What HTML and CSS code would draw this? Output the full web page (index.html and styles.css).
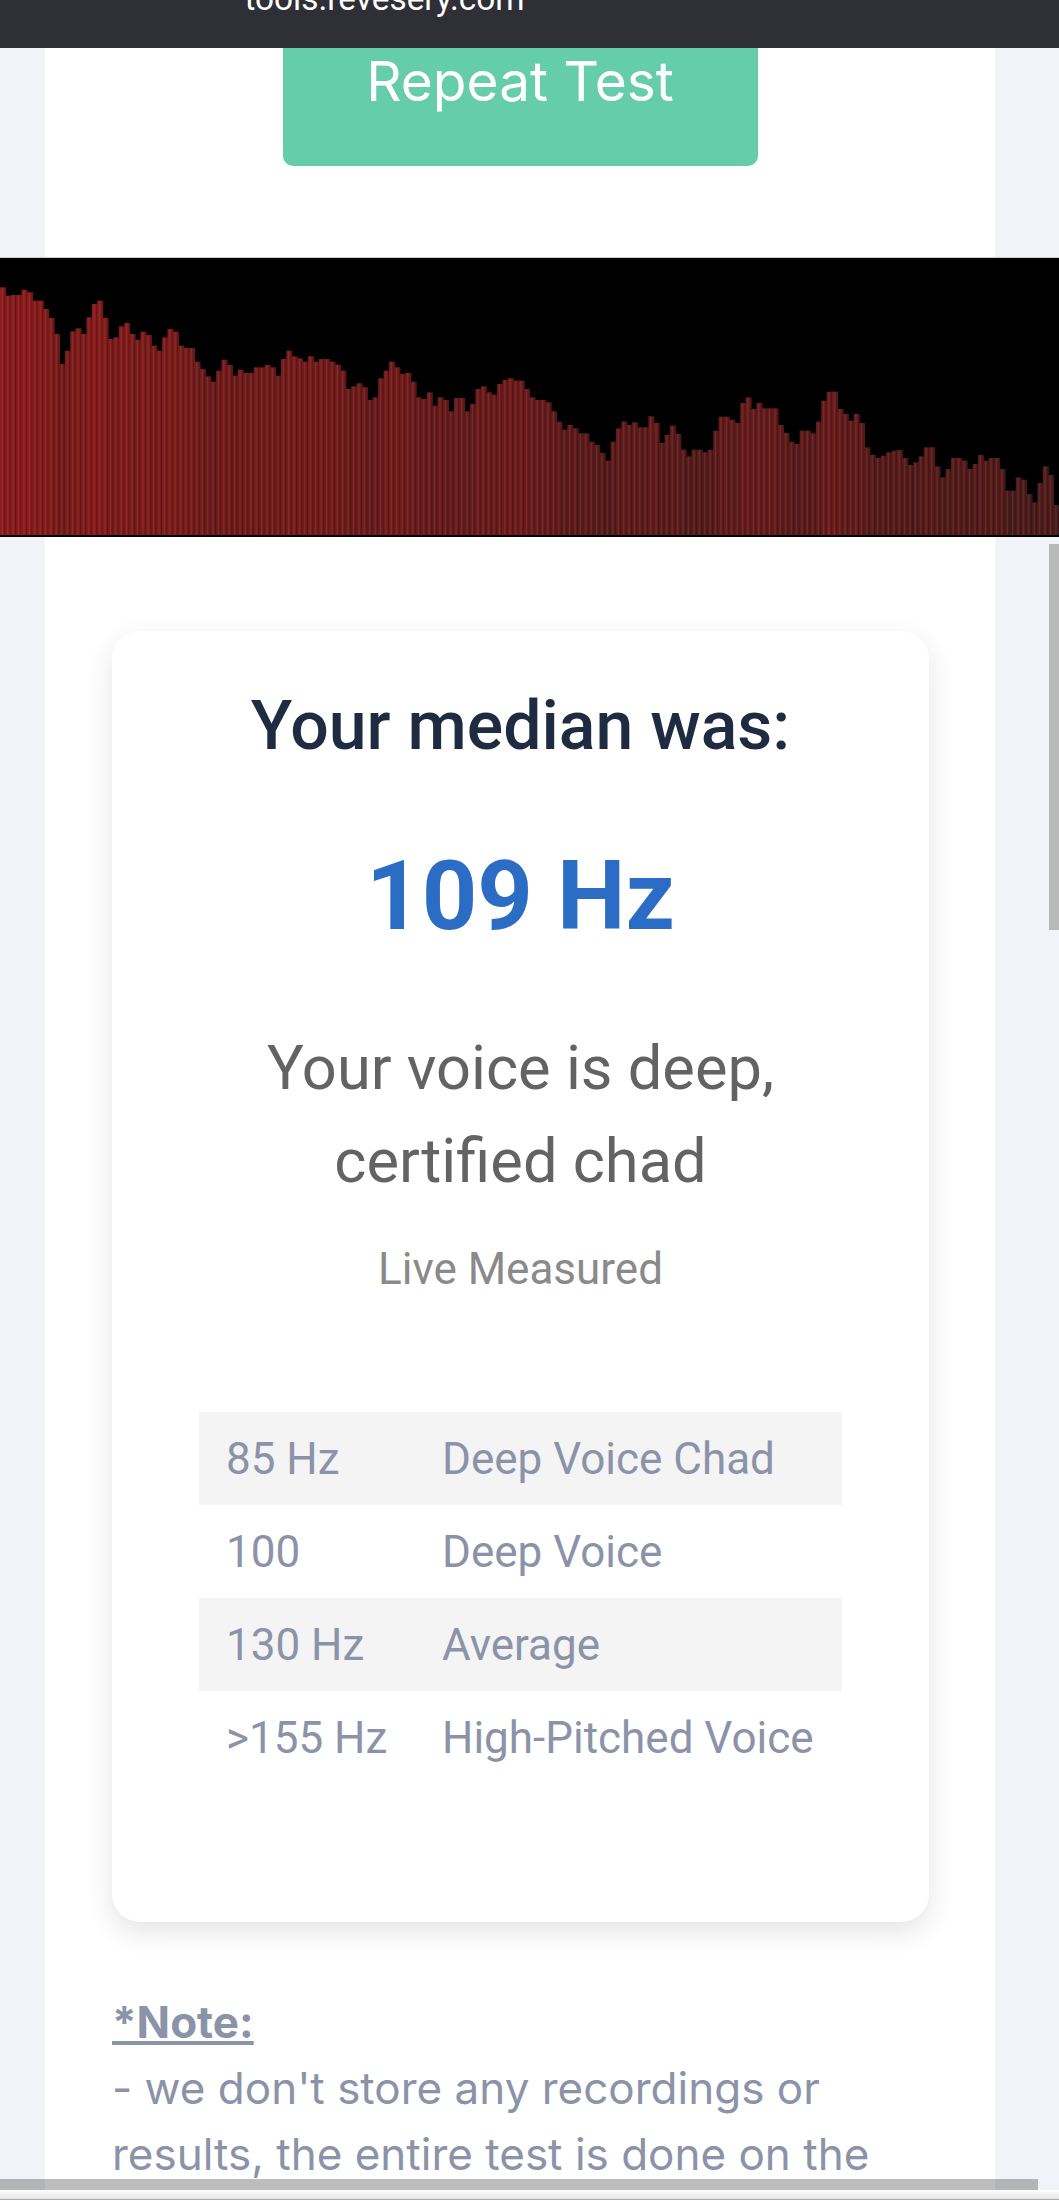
FILE: index.html
```html
<!DOCTYPE html>
<html lang="en">
<head>
<meta charset="utf-8">
<title>Voice Pitch Test</title>
<link rel="stylesheet" href="styles.css">
</head>
<body>
<div class="page">
  <header class="topbar"><span class="domain">tools.revesery.com</span></header>
  <section class="panel panel-top">
    <button class="repeat" type="button">Repeat Test</button>
  </section>
  <div class="visual"><canvas id="spectrum" width="1059" height="278"></canvas></div>
  <section class="panel panel-main">
    <div class="card">
      <h2 class="title">Your median was:</h2>
      <p class="hz">109 Hz</p>
      <p class="verdict">Your voice is deep,<br>certified chad</p>
      <p class="live">Live Measured</p>
      <table class="scale">
        <tr><td>85 Hz</td><td>Deep Voice Chad</td></tr>
        <tr><td>100</td><td>Deep Voice</td></tr>
        <tr><td>130 Hz</td><td>Average</td></tr>
        <tr><td>&gt;155 Hz</td><td>High-Pitched Voice</td></tr>
      </table>
    </div>
    <div class="note">
      <a class="note-head">*Note:</a>
      <p>- we don't store any recordings or results, the entire test is done on the</p>
    </div>
  </section>
  <div class="vscroll"></div>
  <div class="hscroll"></div>
  <div class="bottom-edge"></div>
</div>
<script src="bars.js"></script>
</body>
</html>
```
FILE: styles.css
```css
* { box-sizing: border-box; }
html, body { margin: 0; padding: 0; }
body { background: #f2f3f9; font-family: Inter, "Liberation Sans", sans-serif; }
.page { position: relative; height: 2200px; overflow: hidden; display: flex; flex-direction: column; background: #f2f3f9; }
.topbar { flex: none; height: 48px; background: #2f3035; display: flex; justify-content: center; overflow: hidden; }
.domain { color: #fff; font: 400 33.4px/30px Roboto, sans-serif; margin-top: -16px; margin-right: 290px; }
.panel { flex: none; margin: 0 65px 0 45px; width: 950px; background: #fff; }
.panel-top { height: 209px; display: flex; justify-content: center; align-items: flex-start; }
.repeat { width: 475px; height: 118px; border: 0; border-radius: 0 0 10px 10px; background: #66cdaa; color: #fff; font: 400 55px/66px Inter, sans-serif; padding: 0 0 52px; }
.visual { flex: none; height: 280px; border-top: 1px solid #c9c9ce; background: #000; overflow: hidden; }
canvas { display: block; width: 1059px; height: 278px; filter: blur(.6px); }
.panel-main { flex: 1; padding: 94px 66px 0 67px; }
.card { height: 1291px; border-radius: 28px; box-shadow: 0 10px 28px rgba(0,0,0,.11); background: #fff; text-align: center; padding-top: 55px; }
.title { margin: 0; font: 500 68px/80px Roboto, sans-serif; color: #1f2b40; }
.hz { margin: 75px 0 0; font: 700 97px/110px Roboto, sans-serif; color: #2b6dc5; }
.verdict { margin: 71px 0 0; font: 400 61.4px/93px Roboto, sans-serif; color: #636363; }
.live { margin: 31px 0 0; font: 400 44px/60px Roboto, sans-serif; color: #8a8a8a; }
.scale { margin: 113px auto 0; width: 643px; border-collapse: collapse; text-align: left; font: 400 44px/60px Roboto, sans-serif; color: #8b93a8; }
.scale td { height: 93px; padding: 1px 0 0 27px; }
.scale td:first-child { width: 216px; }
.scale tr:nth-child(odd) { background: #f4f4f4; }
.note { margin-top: 67px; font-size: 44px; line-height: 66px; color: #8b93a8; }
.note-head { font-weight: 700; text-decoration: underline; }
.note p { margin: 0; }
.vscroll { position: absolute; top: 544px; right: 0; width: 10px; height: 386px; background: #b9b9b9; }
.hscroll { position: absolute; left: 0; top: 2179px; width: 1038px; height: 11px; background: rgba(0,0,0,.26); }
.bottom-edge { position: absolute; left: 0; right: 0; top: 2190px; height: 10px; background: linear-gradient(#fff, #e6e6e6 85%, #8d8d8d); }
```
FILE: bars.js
```js
var tops = [
115,140,138,138,122,130,155,155,180,207,255,345,305,247,238,255,205,165,155,207,270,265,232,222,255,272,248,258,290,305,265,240,248,290,297,297,338,360,382,398,365,332,348,380,362,372,372,355,355,348,355,380,330,305,322,328,338,322,338,330,330,338,347,365,420,
412,403,415,453,445,388,365,338,355,375,372,398,445,450,430,470,445,453,487,447,447,487,465,420,412,430,437,405,393,388,395,395,420,445,453,453,460,487,518,542,528,538,553,553,578,588,612,635,578,538,518,528,520,535,535,502,522,582,558,530,555,602,622,602,602,610,
602,545,503,503,512,522,462,445,480,462,478,478,478,528,552,578,585,545,545,553,518,455,428,428,480,495,515,495,522,595,618,627,620,610,605,603,627,648,640,622,595,595,652,685,660,627,627,635,660,645,618,635,627,627,660,725,725,685,692,735,760,702,652,678,768
];
var canvas = document.getElementById('spectrum');
var ctx = canvas.getContext('2d');
ctx.fillStyle = '#000';
ctx.fillRect(0, 0, canvas.width, canvas.height);
var step = canvas.width / tops.length;
tops.forEach(function (t, i) {
  var h = (858 - t) / 3;
  var r = Math.round(58 + h * 0.32);
  var y = canvas.height - 1 - h;
  ctx.fillStyle = 'rgb(' + r + ',28,28)';
  ctx.fillRect(i * step, y, step + 0.5, h);
  ctx.fillStyle = 'rgba(0,0,0,.22)';
  ctx.fillRect(i * step + step * 0.78, y, step * 0.22, h);
  ctx.fillStyle = 'rgba(255,110,110,.14)';
  ctx.fillRect(i * step + step * 0.3, y, step * 0.25, h);
});
```
